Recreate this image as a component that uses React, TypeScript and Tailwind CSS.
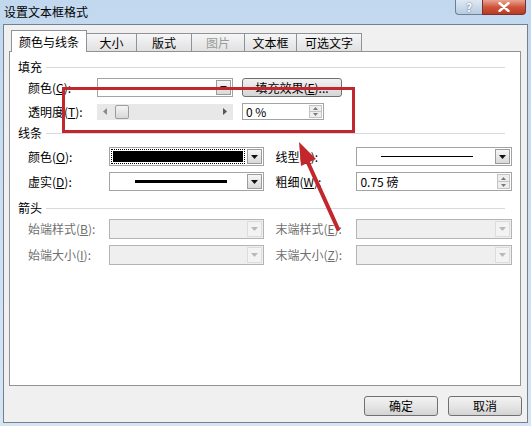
import React from "react";

const font = "font-['Noto_Sans_CJK_SC',sans-serif]";

function DropBtn({ disabled }: { disabled?: boolean }) {
  return (
    <div className="flex h-full items-stretch p-px">
      <div
        className={`flex w-[15px] items-center justify-center border ${
          disabled
            ? "border-[#dcdcdc] bg-[#f3f3f3]"
            : "border-[#9c9c9c] bg-gradient-to-b from-[#f6f6f6] to-[#d9d9d9]"
        }`}
      >
        <svg width="7" height="4" viewBox="0 0 7 4">
          <path d="M0 0h7L3.5 4z" fill={disabled ? "#b9b9b9" : "#111"} />
        </svg>
      </div>
    </div>
  );
}

function Combo({
  className,
  disabled,
  children,
}: {
  className: string;
  disabled?: boolean;
  children?: React.ReactNode;
}) {
  return (
    <div
      className={`flex border ${
        disabled ? "border-[#b4b4b4] bg-[#efefef]" : "border-[#a3a3a3] bg-white"
      } ${className}`}
    >
      <div className="flex flex-1 items-center">{children}</div>
      <DropBtn disabled={disabled} />
    </div>
  );
}

function Spinner() {
  return (
    <div className="flex w-[15px] flex-col p-px">
      <div className="flex flex-1 items-center justify-center border border-[#c4c4c4] bg-[#eeeeee]">
        <svg width="5" height="3" viewBox="0 0 5 3">
          <path d="M0 3h5L2.5 0z" fill="#7a7a7a" />
        </svg>
      </div>
      <div className="flex flex-1 items-center justify-center border border-t-0 border-[#c4c4c4] bg-[#eeeeee]">
        <svg width="5" height="3" viewBox="0 0 5 3">
          <path d="M0 0h5L2.5 3z" fill="#7a7a7a" />
        </svg>
      </div>
    </div>
  );
}

function Label({
  text,
  k,
  w,
  gray,
}: {
  text: string;
  k: string;
  w: string;
  gray?: boolean;
}) {
  return (
    <div className={`${w} pl-[10px] text-[12px] leading-none ${gray ? "text-[#6f6f6f]" : "text-black"}`}>
      {text}(<span className="underline">{k}</span>):
    </div>
  );
}

function Header({ text }: { text: string }) {
  return (
    <div className="flex h-[14px] items-center pr-[7px]">
      <span className="text-[12px] leading-none text-black">{text}</span>
      <div className="ml-[4px] h-px flex-1 bg-[#d5dbe1]" />
    </div>
  );
}

function Tab({ text, w, gray }: { text: string; w: string; gray?: boolean }) {
  return (
    <div
      className={`flex h-[18px] ${w} items-center justify-center border border-b-0 border-[#8e9299] bg-gradient-to-b from-[#f6f6f6] to-[#e1e1e1] text-[12px] ${
        gray ? "text-[#9a9a9a]" : "text-black"
      } -ml-px first:ml-0`}
    >
      {text}
    </div>
  );
}

function PushBtn({ text }: { text: string }) {
  return (
    <div className="flex h-[20px] w-[74px] items-center justify-center rounded-[3px] border border-[#707070] bg-gradient-to-b from-[#f2f2f2] via-[#e6e6e6] to-[#d3d3d3] text-[12px] text-black">
      {text}
    </div>
  );
}

export default function App() {
  return (
    <div
      className={`${font} relative h-[426px] w-[531px] overflow-hidden bg-gradient-to-b from-[#c2d8ee] to-[#d7e5f3]`}
    >
      {/* title bar */}
      <div className="flex h-[24px] items-start justify-between">
        <div className="pl-[4px] pt-[4px] text-[12px] leading-[16px] text-black">设置文本框格式</div>
        <div className="mr-[5px] flex">
          <div className="flex h-[15px] w-[28px] items-center justify-center rounded-bl-[4px] border border-t-0 border-[#6d7f93] bg-gradient-to-b from-[#dfe9f4] to-[#b8cbe0] text-[11px] font-bold leading-none text-white [text-shadow:0_0_2px_#4a5d74]">
            ?
          </div>
          <div className="-ml-px flex h-[15px] w-[44px] items-center justify-center rounded-br-[4px] border border-t-0 border-[#7a3030] bg-gradient-to-b from-[#e8a493] via-[#d0543c] to-[#b83a22]">
            <svg width="12" height="10" viewBox="0 0 12 10">
              <path d="M1.5 1l9 8M10.5 1l-9 8" stroke="#fff" strokeWidth="2.4" strokeLinecap="round" />
            </svg>
          </div>
        </div>
      </div>

      {/* client area */}
      <div className="mx-[3px] flex h-[399px] flex-col border border-[#6f8192] bg-[#f0f0f0]">
        <div className="flex h-[26px] items-end pl-[7px] pt-[5px]">
          <div className="relative z-10 -mb-px flex h-[22px] w-[76px] items-center justify-center border border-b-0 border-[#8e9299] bg-white text-[12px] text-black">
            颜色与线条
          </div>
          <div className="-ml-px flex">
            <Tab text="大小" w="w-[51px]" />
            <Tab text="版式" w="w-[56px]" />
            <Tab text="图片" w="w-[54px]" gray />
            <Tab text="文本框" w="w-[53px]" />
            <Tab text="可选文字" w="w-[66px]" />
          </div>
        </div>

        {/* panel */}
        <div className="ml-[5px] mr-[6px] flex h-[335px] flex-col border border-[#8e9299] bg-white pl-[8px] pt-[8px] pr-[8px]">
          <Header text="填充" />
          <div className="mt-[4px] flex h-[19px] items-center">
            <Label text="颜色" k="C" w="w-[79px]" />
            <Combo className="h-[19px] w-[136px]" />
            <div className="ml-[9px] flex h-[19px] w-[100px] items-center justify-center rounded-[3px] border border-[#707070] bg-gradient-to-b from-[#f2f2f2] to-[#d6d6d6] text-[12px] text-black">
              填充效果(<span className="underline">E</span>)...
            </div>
          </div>
          <div className="mt-[6px] flex h-[17px] items-center">
            <Label text="透明度" k="T" w="w-[79px]" />
            <div className="flex h-[16px] w-[136px] items-center bg-[#e8e8e8] px-[6px]">
              <svg width="4" height="7" viewBox="0 0 4 7">
                <path d="M4 0v7L0 3.5z" fill="#8a8a8a" />
              </svg>
              <div className="ml-[8px] h-[14px] w-[14px] rounded-[2px] border border-[#9d9d9d] bg-gradient-to-b from-[#f4f4f4] to-[#d8d8d8]" />
              <div className="flex-1" />
              <svg width="4" height="7" viewBox="0 0 4 7">
                <path d="M0 0v7L4 3.5z" fill="#555" />
              </svg>
            </div>
            <div className="ml-[9px] flex h-[17px] w-[82px] border border-[#a3a3a3] bg-white">
              <div className="flex flex-1 items-center pl-[3px] text-[12px] leading-none text-black">0 %</div>
              <Spinner />
            </div>
          </div>

          <div className="mt-[6px]">
            <Header text="线条" />
          </div>
          <div className="mt-[7px] flex h-[19px] items-center">
            <Label text="颜色" k="O" w="w-[91px]" />
            <Combo className="h-[19px] w-[156px]">
              <div className="m-px h-[15px] flex-1 border border-dotted border-black p-px">
                <div className="h-full w-full bg-black" />
              </div>
            </Combo>
            <div className="ml-[11px]">
              <Label text="线型" k="S" w="w-[81px] !pl-0" />
            </div>
            <Combo className="h-[19px] w-[156px]">
              <div className="ml-[24px] h-px w-[92px] bg-black" />
            </Combo>
          </div>
          <div className="mt-[6px] flex h-[19px] items-center">
            <Label text="虚实" k="D" w="w-[91px]" />
            <Combo className="h-[19px] w-[156px]">
              <div className="ml-[25px] h-[3px] w-[92px] bg-black" />
            </Combo>
            <div className="ml-[11px]">
              <Label text="粗细" k="W" w="w-[81px] !pl-0" />
            </div>
            <div className="flex h-[19px] w-[156px] border border-[#a3a3a3] bg-white">
              <div className="flex flex-1 items-center pl-[3px] text-[12px] leading-none text-black">0.75 磅</div>
              <Spinner />
            </div>
          </div>

          <div className="mt-[10px]">
            <Header text="箭头" />
          </div>
          <div className="mt-[4px] flex h-[20px] items-center">
            <Label text="始端样式" k="B" w="w-[91px]" gray />
            <Combo className="h-[20px] w-[156px]" disabled />
            <div className="ml-[11px]">
              <Label text="末端样式" k="E" w="w-[81px] !pl-0" gray />
            </div>
            <Combo className="h-[20px] w-[156px]" disabled />
          </div>
          <div className="mt-[6px] flex h-[20px] items-center">
            <Label text="始端大小" k="I" w="w-[91px]" gray />
            <Combo className="h-[20px] w-[156px]" disabled />
            <div className="ml-[11px]">
              <Label text="末端大小" k="Z" w="w-[81px] !pl-0" gray />
            </div>
            <Combo className="h-[20px] w-[156px]" disabled />
          </div>
        </div>

        {/* buttons */}
        <div className="mt-[10px] flex justify-end gap-[10px] pr-[5px]">
          <PushBtn text="确定" />
          <PushBtn text="取消" />
        </div>
      </div>

      {/* annotation overlay */}
      <div className="absolute left-[62px] top-[87px] h-[46px] w-[293px] border-[3px] border-[#c1272d]" />
      <svg className="absolute left-0 top-0" width="531" height="426" viewBox="0 0 531 426">
        <path d="M338 229L305 156" stroke="#c1272d" strokeWidth="4" strokeLinecap="round" />
        <path d="M299 142L316 159L301 166z" fill="#c1272d" />
      </svg>
    </div>
  );
}
